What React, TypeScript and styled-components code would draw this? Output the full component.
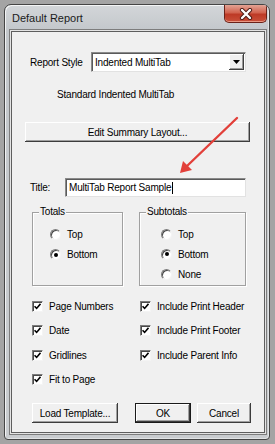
import React from 'react';
import styled, { createGlobalStyle } from 'styled-components';

const GlobalStyle = createGlobalStyle`
    html, body {
        margin: 0;
        padding: 0;
    }
    body {
        width: 275px;
        height: 444px;
        overflow: hidden;
        background: #a4a4a4;
        font-family: "Liberation Sans", Arial, sans-serif;
        font-size: 10px;
        letter-spacing: -0.2px;
        color: #000000;
    }
`;

const Window = styled('div')`
    box-sizing: border-box;
    margin: 4px 0 0 4px;
    width: 266px;
    height: 436px;
    border: 1px solid #454545;
    border-radius: 7px 7px 4px 4px;
    background: linear-gradient(to bottom, #d3d6d9 0px, #c3c7cb 26px, #c9cccf 100%);
    box-shadow: inset 1px 1px 0 rgba(255, 255, 255, 0.75), inset -1px -1px 0 rgba(255, 255, 255, 0.45);
    display: flex;
    flex-direction: column;
    overflow: hidden;
`;

const TitleBar = styled('div')`
    height: 26px;
    display: flex;
    align-items: flex-start;
    padding-left: 7px;
    padding-right: 2px;
    flex-shrink: 0;
`;

const TitleText = styled('span')`
    margin-top: 7px;
    font-size: 11px;
    letter-spacing: 0;
    color: #1b1b1b;
`;

const CloseButton = styled('div')`
    margin-left: auto;
    width: 43px;
    height: 18px;
    box-sizing: border-box;
    border: 1px solid #6b2219;
    border-top: none;
    border-radius: 0 0 5px 5px;
    background: linear-gradient(to bottom, #e3a394 0%, #d1634f 45%, #bd3a26 55%, #c9503a 100%);
    box-shadow: inset 0 -1px 0 rgba(255, 200, 180, 0.6);
    display: flex;
    align-items: center;
    justify-content: center;
`;

const Frame = styled('div')`
    flex: 1;
    display: flex;
    padding: 0 4px 6px 6px;
`;

const Client = styled('div')`
    flex: 1;
    position: relative;
    border: 1px solid #5e5e5e;
    box-shadow: 0 0 0 1px #e4e4e4, 0 0 0 2px #7d7d7d;
    background: #f0f0f0;
    display: flex;
    flex-direction: column;
`;

const Row = styled('div')<{ $top: number; $left: number; $height?: number }>`
    display: flex;
    align-items: center;
    margin-top: ${(p) => p.$top}px;
    padding-left: ${(p) => p.$left}px;
    height: ${(p) => (p.$height ? `${p.$height}px` : 'auto')};
`;

const Label = styled('span')<{ $width: number }>`
    width: ${(p) => p.$width}px;
    flex-shrink: 0;
`;

const Sunken = styled('div')<{ $width: number; $height: number }>`
    box-sizing: border-box;
    width: ${(p) => p.$width}px;
    height: ${(p) => p.$height}px;
    background: #ffffff;
    border: 1px solid;
    border-color: #8a8a8a #e2e2e2 #e2e2e2 #8a8a8a;
    box-shadow: inset 1px 1px 0 #5a5a5a;
    display: flex;
    align-items: center;
    padding-left: 3px;
    position: relative;
`;

const DropButton = styled('div')`
    position: absolute;
    right: 1px;
    top: 1px;
    bottom: 1px;
    width: 15px;
    box-sizing: border-box;
    background: #f0f0f0;
    box-shadow: inset -1px -1px 0 #404040, inset 1px 1px 0 #ffffff, inset -2px -2px 0 #9a9a9a;
    display: flex;
    align-items: center;
    justify-content: center;
`;

const Caret = styled('span')`
    display: inline-block;
    width: 1px;
    height: 12px;
    background: #000000;
    margin-left: 1px;
`;

const Description = styled('div')`
    margin-top: 17px;
    padding-left: 45px;
    height: 12px;
    line-height: 12px;
`;

const Button = styled('div')<{ $width: number; $default?: boolean }>`
    box-sizing: border-box;
    width: ${(p) => p.$width}px;
    height: 20px;
    background: #f0f0f0;
    border: ${(p) => (p.$default ? '1px solid #1a1a1a' : 'none')};
    box-shadow: inset -1px -1px 0 #3c3c3c, inset 1px 1px 0 #ffffff, inset -2px -2px 0 #a0a0a0;
    display: flex;
    align-items: center;
    justify-content: center;
    flex-shrink: 0;
`;

const Groups = styled('div')`
    display: flex;
    gap: 16px;
    margin-top: 15px;
    padding-left: 20px;
`;

const GroupBox = styled('div')<{ $width: number; $inset: number }>`
    position: relative;
    box-sizing: border-box;
    width: ${(p) => p.$width}px;
    height: 74px;
    border: 1px solid #a0a0a0;
    box-shadow: inset 1px 1px 0 #ffffff, 1px 1px 0 #ffffff;
    padding: 11px 0 0 ${(p) => p.$inset}px;
    display: flex;
    flex-direction: column;
`;

const Legend = styled('span')`
    position: absolute;
    top: -7px;
    left: 6px;
    padding: 0 1px;
    background: #f0f0f0;
    line-height: 12px;
`;

const OptionRow = styled('div')`
    display: flex;
    align-items: center;
    height: 20.5px;
    gap: 6px;
`;

const RadioCircle = styled('span')<{ $on?: boolean }>`
    box-sizing: border-box;
    width: 11px;
    height: 11px;
    border-radius: 50%;
    border: 1px solid;
    border-color: #7c7c7c #f4f4f4 #f4f4f4 #7c7c7c;
    background: #ffffff;
    box-shadow: inset 1px 1px 0 #4a4a4a;
    display: flex;
    align-items: center;
    justify-content: center;
    flex-shrink: 0;
    &::after {
        content: '';
        width: 4px;
        height: 4px;
        border-radius: 50%;
        background: #000000;
        display: ${(p) => (p.$on ? 'block' : 'none')};
    }
`;

const Checks = styled('div')`
    display: grid;
    grid-template-columns: 108px 1fr;
    grid-auto-rows: 24.5px;
    margin-top: 8px;
    padding-left: 20px;
`;

const CheckItem = styled('div')`
    display: flex;
    align-items: center;
    gap: 6px;
`;

const CheckBox = styled('span')`
    box-sizing: border-box;
    width: 11px;
    height: 11px;
    background: #ffffff;
    border: 1px solid;
    border-color: #7c7c7c #f4f4f4 #f4f4f4 #7c7c7c;
    box-shadow: inset 1px 1px 0 #4a4a4a;
    display: flex;
    align-items: center;
    justify-content: center;
    flex-shrink: 0;
`;

const ButtonRow = styled('div')`
    display: flex;
    margin-top: 11px;
    padding-left: 20px;
`;

const Arrow = styled('svg')`
    position: absolute;
    left: 0;
    top: 0;
    pointer-events: none;
`;

const Radio = ({ label, on }: { label: string; on?: boolean }) => (
    <OptionRow>
        <RadioCircle $on={on} />
        <span>{label}</span>
    </OptionRow>
);

const Check = ({ label }: { label: string }) => (
    <CheckItem>
        <CheckBox>
            <svg width="7" height="7" viewBox="0 0 7 7">
                <path d="M0.5 3.2 L2.6 5.4 L6.5 0.8" fill="none" stroke="#000" strokeWidth="1.6" />
            </svg>
        </CheckBox>
        <span>{label}</span>
    </CheckItem>
);

const App = () => {
    return (
        <>
            <GlobalStyle />
            <Window>
                <TitleBar>
                    <TitleText>Default Report</TitleText>
                    <CloseButton>
                        <svg width="14" height="12" viewBox="0 0 14 12">
                            <path d="M3 2 L11 10 M11 2 L3 10" stroke="#4a1a14" strokeWidth="4.2" strokeLinecap="round" />
                            <path d="M3 2 L11 10 M11 2 L3 10" stroke="#ffffff" strokeWidth="2.4" strokeLinecap="round" />
                        </svg>
                    </CloseButton>
                </TitleBar>
                <Frame>
                    <Client>
                        <Row $top={20} $left={18} $height={20}>
                            <Label $width={61}>Report Style</Label>
                            <Sunken $width={155} $height={20}>
                                Indented MultiTab
                                <DropButton>
                                    <svg width="7" height="4" viewBox="0 0 7 4">
                                        <path d="M0 0 H7 L3.5 4 Z" fill="#000" />
                                    </svg>
                                </DropButton>
                            </Sunken>
                        </Row>
                        <Description>Standard Indented MultiTab</Description>
                        <Row $top={21} $left={13}>
                            <Button $width={225}>Edit Summary Layout...</Button>
                        </Row>
                        <Row $top={36} $left={18} $height={19}>
                            <Label $width={35}>Title:</Label>
                            <Sunken $width={181} $height={19}>
                                MultiTab Report Sample
                                <Caret />
                            </Sunken>
                        </Row>
                        <Groups>
                            <GroupBox $width={91} $inset={17}>
                                <Legend>Totals</Legend>
                                <Radio label="Top" />
                                <Radio label="Bottom" on />
                            </GroupBox>
                            <GroupBox $width={107} $inset={21}>
                                <Legend>Subtotals</Legend>
                                <Radio label="Top" />
                                <Radio label="Bottom" on />
                                <Radio label="None" />
                            </GroupBox>
                        </Groups>
                        <Checks>
                            <Check label="Page Numbers" />
                            <Check label="Include Print Header" />
                            <Check label="Date" />
                            <Check label="Include Print Footer" />
                            <Check label="Gridlines" />
                            <Check label="Include Parent Info" />
                            <Check label="Fit to Page" />
                        </Checks>
                        <ButtonRow>
                            <Button $width={86}>Load Template...</Button>
                            <Button $width={56} $default style={{ marginLeft: 17 }}>OK</Button>
                            <Button $width={54} style={{ marginLeft: 6 }}>Cancel</Button>
                        </ButtonRow>
                        <Arrow width="252" height="400" viewBox="0 0 252 400">
                            <line x1="225" y1="86" x2="175" y2="134" stroke="#e2403a" strokeWidth="2.4" strokeLinecap="round" />
                            <path d="M168 141 L171 129 L180 138 Z" fill="#e2403a" />
                        </Arrow>
                    </Client>
                </Frame>
            </Window>
        </>
    );
};

export default App;
